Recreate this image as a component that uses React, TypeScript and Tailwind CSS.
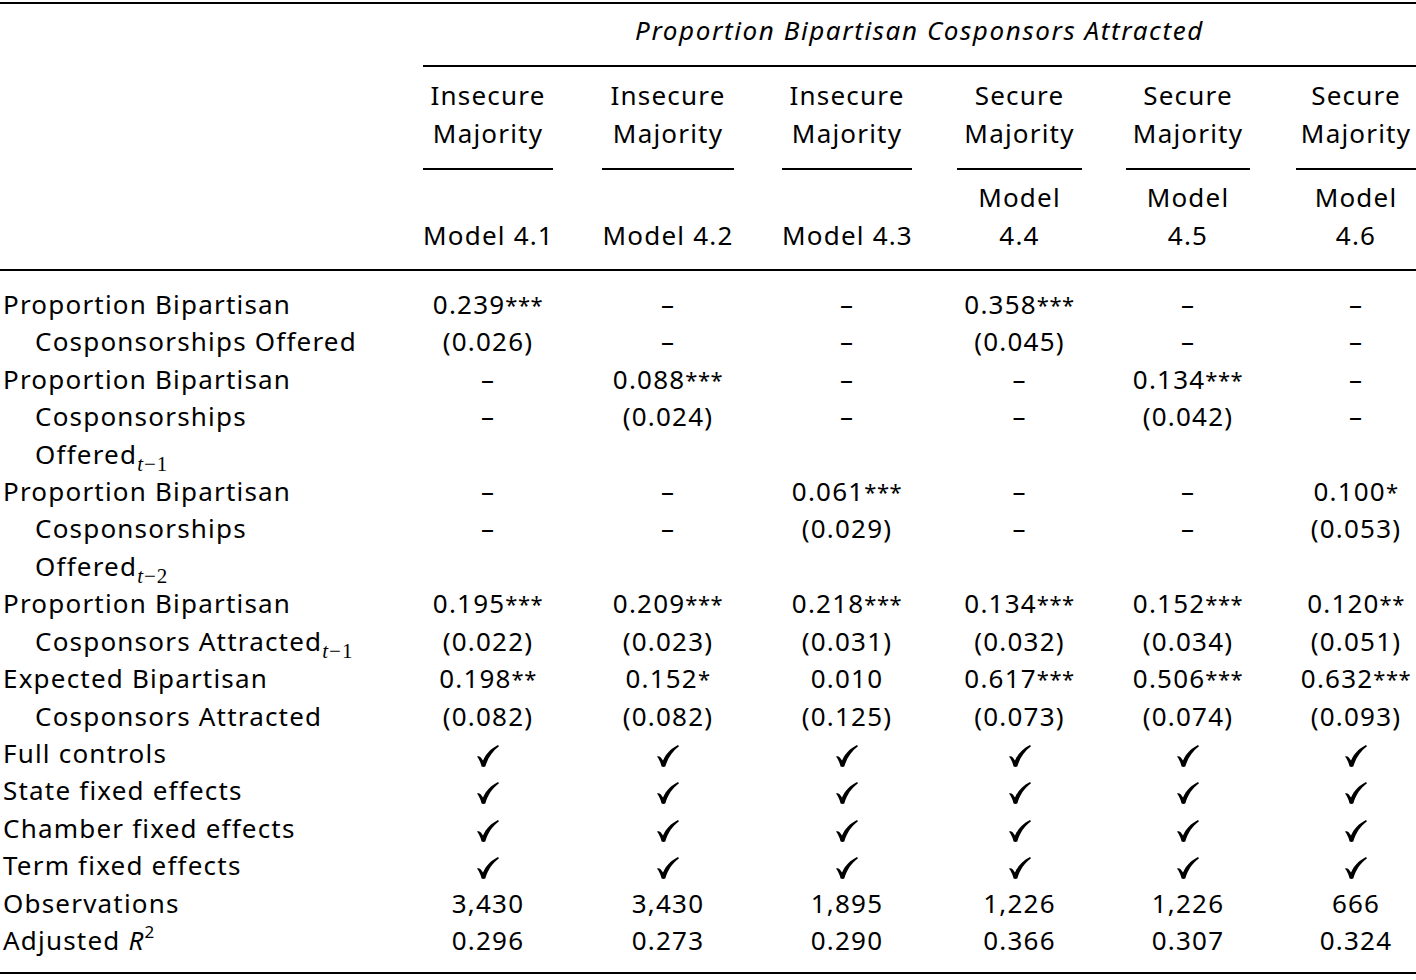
import React from "react";

const GRID = "grid grid-cols-[399px_179px_180px_176px_168px_170px_144px]";
const PAD = [
  "pl-[24px] pr-[25px]",
  "pl-[24px] pr-[24px]",
  "pl-[24px] pr-[22px]",
  "pl-[23px] pr-[20px]",
  "pl-[24px] pr-[22px]",
  "pl-[24px] pr-0",
];

function Check() {
  return (
    <svg width="24" height="24" viewBox="0 0 24 24" className="inline-block align-middle">
      <path
        d="M1 12.5 C3 11.5 5 13 7 16.5 C10 9.5 15 4.5 22 1 L23 2.2 C16.5 7 12 13.5 9.3 22.5 C8.4 23 6.6 23 5.6 22.5 C4.6 18.5 3 15 1 12.5 Z"
        fill="#000"
      />
    </svg>
  );
}

function Sub({ t }: { t: string }) {
  return (
    <span className="relative top-[7px] leading-[0] tracking-[1px] text-[21px] font-['Liberation_Serif',serif]">
      <i>t</i>−{t}
    </span>
  );
}

function Num({ v }: { v: string }) {
  const m = v.match(/^([^*]*)(\**)$/);
  const base = m ? m[1] : v;
  const stars = m ? m[2] : "";
  return (
    <span>
      {base}
      {stars && <span className="text-[22px] tracking-[0.5px] leading-[0] relative -top-[1px]">{stars}</span>}
    </span>
  );
}

type Cell = React.ReactNode;

function Row({ label, indent, cells }: { label: React.ReactNode; indent?: boolean; cells: Cell[] }) {
  return (
    <div className={GRID}>
      <div className={indent ? "pl-[35px] whitespace-nowrap" : "pl-[3px] whitespace-nowrap"}>{label}</div>
      {cells.map((c, i) => (
        <div key={i} className={`${PAD[i]} text-center whitespace-nowrap`}>
          {typeof c === "string" ? <Num v={c} /> : c}
        </div>
      ))}
    </div>
  );
}

const D = "–";
const CK = [<Check />, <Check />, <Check />, <Check />, <Check />, <Check />];

export default function App() {
  const groups = ["Insecure", "Insecure", "Insecure", "Secure", "Secure", "Secure"];
  return (
    <div className="w-[1416px] h-[980px] bg-white text-black font-['Noto_Sans',sans-serif] text-[26px] leading-[37.4px] tracking-[1.2px]">
      <div className="h-[2px] bg-black mt-[2px]" />
      {/* title */}
      <div className={GRID + " pt-[8px]"}>
        <div />
        <div className="col-span-6 pl-[24px]">
          <div className="text-center italic tracking-[1.6px] whitespace-nowrap">Proportion Bipartisan Cosponsors Attracted</div>
          <div className="h-[2px] bg-black mt-[16px]" />
        </div>
      </div>
      {/* groups */}
      <div className={GRID + " pt-[10px]"}>
        <div />
        {groups.map((g, i) => (
          <div key={i} className={PAD[i]}>
            <div className="text-center whitespace-nowrap">
              {g}
              <br />
              Majority
            </div>
            <div className="h-[2px] bg-black mt-[16px]" />
          </div>
        ))}
      </div>
      {/* models */}
      <div className={GRID + " pt-[9px]"}>
        <div />
        {["Model 4.1", "Model 4.2", "Model 4.3"].map((m, i) => (
          <div key={i} className={`${PAD[i]} flex flex-col justify-end text-center whitespace-nowrap`}>
            {m}
          </div>
        ))}
        {["4.4", "4.5", "4.6"].map((m, j) => (
          <div key={j} className={`${PAD[j + 3]} text-center whitespace-nowrap`}>
            Model
            <br />
            {m}
          </div>
        ))}
      </div>
      <div className="h-[2px] bg-black mt-[15px]" />
      <div className="pt-[15px]">
        <Row label="Proportion Bipartisan" cells={["0.239***", D, D, "0.358***", D, D]} />
        <Row label="Cosponsorships Offered" indent cells={["(0.026)", D, D, "(0.045)", D, D]} />
        <Row label="Proportion Bipartisan" cells={[D, "0.088***", D, D, "0.134***", D]} />
        <Row label="Cosponsorships" indent cells={[D, "(0.024)", D, D, "(0.042)", D]} />
        <Row
          label={
            <>
              Offered
              <Sub t="1" />
            </>
          }
          indent
          cells={["", "", "", "", "", ""]}
        />
        <Row label="Proportion Bipartisan" cells={[D, D, "0.061***", D, D, "0.100*"]} />
        <Row label="Cosponsorships" indent cells={[D, D, "(0.029)", D, D, "(0.053)"]} />
        <Row
          label={
            <>
              Offered
              <Sub t="2" />
            </>
          }
          indent
          cells={["", "", "", "", "", ""]}
        />
        <Row
          label="Proportion Bipartisan"
          cells={["0.195***", "0.209***", "0.218***", "0.134***", "0.152***", "0.120**"]}
        />
        <Row
          label={
            <>
              Cosponsors Attracted
              <Sub t="1" />
            </>
          }
          indent
          cells={["(0.022)", "(0.023)", "(0.031)", "(0.032)", "(0.034)", "(0.051)"]}
        />
        <Row
          label="Expected Bipartisan"
          cells={["0.198**", "0.152*", "0.010", "0.617***", "0.506***", "0.632***"]}
        />
        <Row
          label="Cosponsors Attracted"
          indent
          cells={["(0.082)", "(0.082)", "(0.125)", "(0.073)", "(0.074)", "(0.093)"]}
        />
        <Row label="Full controls" cells={CK} />
        <Row label="State fixed effects" cells={CK} />
        <Row label="Chamber fixed effects" cells={CK} />
        <Row label="Term fixed effects" cells={CK} />
        <Row label="Observations" cells={["3,430", "3,430", "1,895", "1,226", "1,226", "666"]} />
        <Row
          label={
            <>
              Adjusted <i>R</i>
              <span className="text-[17px] leading-[0] relative -top-[12px]">2</span>
            </>
          }
          cells={["0.296", "0.273", "0.290", "0.366", "0.307", "0.324"]}
        />
      </div>
      <div className="h-[2px] bg-black mt-[13px]" />
    </div>
  );
}
